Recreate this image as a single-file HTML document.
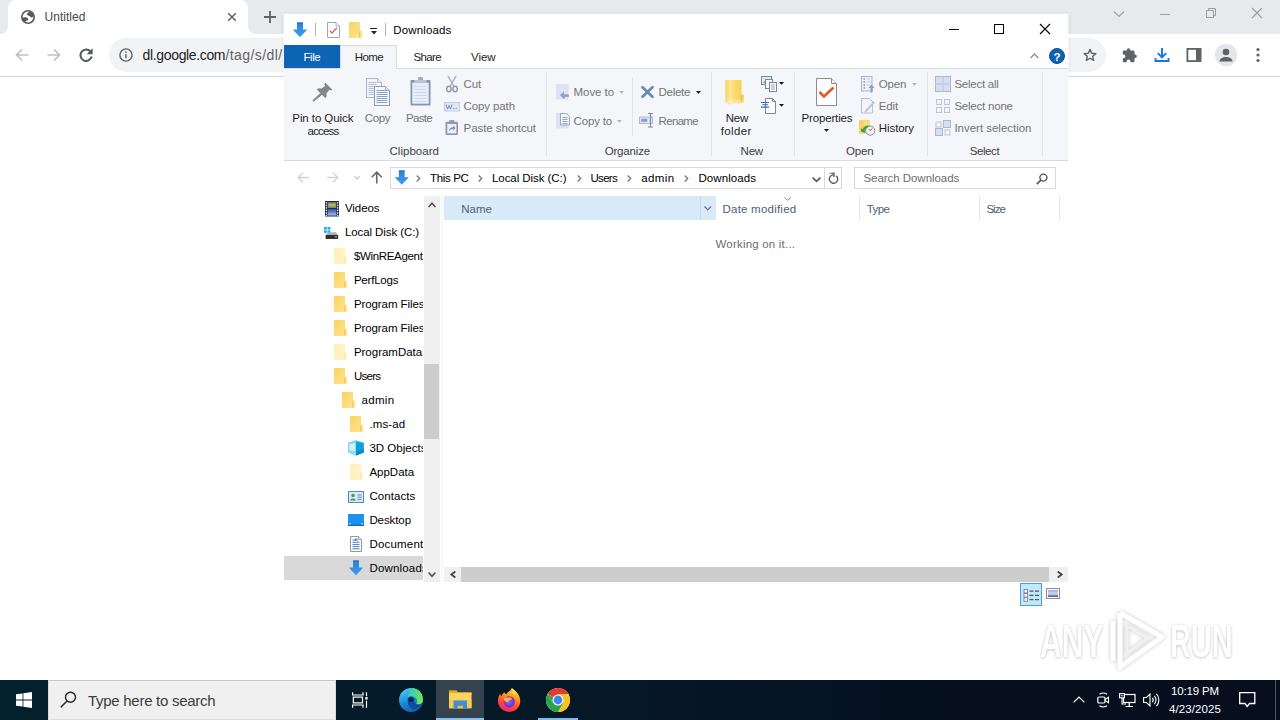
<!DOCTYPE html>
<html>
<head>
<meta charset="utf-8">
<title>Untitled</title>
<style>
*{box-sizing:border-box;margin:0;padding:0}
html,body{width:1280px;height:720px;overflow:hidden;background:#fff}
body{font-family:"Liberation Sans",sans-serif;font-size:12px;color:#000;position:relative}
div,span,svg{position:absolute}
svg{overflow:visible}
.t{white-space:pre;line-height:1}
.vs{width:1px;background:#e2e3e4}
</style>
</head>
<body>
<!-- CHROME BROWSER -->
<div style="left:0px;top:0px;width:1280px;height:34px;background:#e7eaed;"></div>
<div style="left:8px;top:0px;width:240px;height:34px;background:#fff;border-radius:8px 8px 0 0"></div>
<svg style="left:0px;top:26px;" width="8" height="8" viewBox="0 0 8 8"><path d="M0 8 H8 V0 A8 8 0 0 1 0 8Z" fill="#fff"/></svg>
<svg style="left:248px;top:26px;" width="8" height="8" viewBox="0 0 8 8"><path d="M8 8 H0 V0 A8 8 0 0 0 8 8Z" fill="#fff"/></svg>
<div style="left:0px;top:34px;width:1280px;height:42px;background:#fff;"></div>
<div style="left:0px;top:76px;width:1280px;height:1px;background:#d5d7db;"></div>
<div style="left:109px;top:38px;width:997px;height:34px;background:#f1f3f4;border-radius:17px"></div>
<svg style="left:21px;top:10px;" width="14" height="14" viewBox="0 0 14 14"><circle cx="7" cy="7" r="6.200" fill="#fff" stroke="#55585c" stroke-width="1.600"/><path d="M5.800 4.300 C6.300 3 7.300 2.300 8.300 1.700 C10.300 2 12.200 3.800 12.600 6.300 C11.800 7.300 10.600 7.800 9.600 7.200 C9.300 6.200 8.600 6 7.800 5.800 C7 5.600 6.200 5.200 5.800 4.300Z" fill="#55585c"/><path d="M1.200 8 C2.500 7.100 4.300 7 5.500 7.400 C6.700 7.800 7.600 8.700 7.200 9.700 C6.600 10.400 5.500 10.300 4.800 11 C4.300 11.500 4.200 12.100 4 12.400 C2.500 11.600 1.400 10 1.200 8Z" fill="#55585c"/></svg>
<span class="t" style="left:44.50px;top:11px;font-size:12px;color:#45474a;letter-spacing:0.039px;">Untitled</span>
<svg style="left:227px;top:12px;" width="10" height="10" viewBox="0 0 10 10"><path d="M1.200 1.200 L8.800 8.800 M8.800 1.200 L1.200 8.800" stroke="#5f6368" stroke-width="1.500" fill="none"/></svg>
<svg style="left:263px;top:10px;" width="14" height="14" viewBox="0 0 14 14"><path d="M7 1 V13 M1 7 H13" stroke="#5f6368" stroke-width="1.800" fill="none"/></svg>
<svg style="left:15px;top:48px;" width="14" height="14" viewBox="0 0 14 14"><path d="M13.500 7 H1.800 M7 1.500 L1.500 7 L7 12.500" stroke="#bdc1c6" stroke-width="1.700" fill="none"/></svg>
<svg style="left:47px;top:48px;" width="14" height="14" viewBox="0 0 14 14"><path d="M.5 7 H12.200 M7 1.500 L12.500 7 L7 12.500" stroke="#bdc1c6" stroke-width="1.700" fill="none"/></svg>
<svg style="left:79px;top:48px;" width="14" height="14" viewBox="0 0 14 14"><path d="M11.600 3.600 A5.700 5.700 0 1 0 12.700 8.600" stroke="#54575b" stroke-width="2" fill="none"/><path d="M13.600 .3 V6.200 H7.700Z" fill="#54575b"/></svg>
<svg style="left:119px;top:48px;" width="14" height="14" viewBox="0 0 14 14"><circle cx="7" cy="7" r="6.100" fill="none" stroke="#5f6368" stroke-width="1.400"/><path d="M7 6.200 V10.300" stroke="#5f6368" stroke-width="1.500"/><circle cx="7" cy="4.100" r=".9" fill="#5f6368"/></svg>
<span class="t" style="left:142.60px;top:48px;font-size:14px;color:#202124;letter-spacing:-0.352px;">dl.google.com</span>
<span class="t" style="left:225.40px;top:48px;font-size:14px;color:#5f6368;letter-spacing:0.428px;">/tag/s/dl/</span>
<svg style="left:1083px;top:48px;" width="14" height="14" viewBox="0 0 16 16"><path d="M8 1.600 L9.900 6 L14.700 6.400 L11.100 9.500 L12.200 14.200 L8 11.700 L3.800 14.200 L4.900 9.500 L1.300 6.400 L6.100 6Z" fill="none" stroke="#5f6368" stroke-width="1.600" stroke-linejoin="round"/></svg>
<svg style="left:1122px;top:47px;" width="16" height="16" viewBox="0 0 16 16"><path d="M6.500 1.200a1.700 1.700 0 0 1 1.700 1.700v.6h3.100a1.200 1.200 0 0 1 1.200 1.200v2.900h.6a1.750 1.750 0 0 1 0 3.500h-.6v2.900a1.200 1.200 0 0 1-1.200 1.200h-2.800v-.7a1.900 1.900 0 0 0-3.800 0v.7H2a1.200 1.200 0 0 1-1.200-1.200v-2.800h.7a1.900 1.900 0 0 0 0-3.800H.8V4.700A1.200 1.200 0 0 1 2 3.500h2.800v-.6a1.700 1.700 0 0 1 1.700-1.700z" fill="#5f6368"/></svg>
<svg style="left:1154px;top:47px;" width="16" height="16" viewBox="0 0 16 16"><path d="M8 1 V10 M3.800 6.200 L8 10.400 L12.200 6.200" stroke="#1a73e8" stroke-width="1.900" fill="none"/><path d="M1.500 11 V14 H14.500 V11" stroke="#1a73e8" stroke-width="1.900" fill="none"/></svg>
<svg style="left:1186px;top:47px;" width="16" height="16" viewBox="0 0 16 16"><rect x="1.400" y="1.900" width="13.200" height="12.200" fill="none" stroke="#5f6368" stroke-width="1.800"/><rect x="10" y="2" width="4.500" height="12" fill="#5f6368"/></svg>
<svg style="left:1214px;top:43px;" width="24" height="24" viewBox="0 0 24 24"><circle cx="12" cy="12" r="11.200" fill="#e4e6e9"/><circle cx="12" cy="9" r="3.300" fill="#5f6368"/><path d="M5.500 18.500c0-3 3.200-4.600 6.500-4.600s6.500 1.600 6.500 4.600z" fill="#5f6368"/></svg>
<svg style="left:1256px;top:47px;" width="4" height="16" viewBox="0 0 4 16"><circle cx="2" cy="2.500" r="1.600" fill="#5f6368"/><circle cx="2" cy="8" r="1.600" fill="#5f6368"/><circle cx="2" cy="13.500" r="1.600" fill="#5f6368"/></svg>
<svg style="left:1113px;top:10px;" width="12" height="8" viewBox="0 0 12 8"><path d="M1 1.500 L6 6.500 L11 1.500" stroke="#9aa0a6" stroke-width="1.100" fill="none"/></svg>
<svg style="left:1160px;top:13.5px;" width="10" height="1" viewBox="0 0 10 1"><rect width="10" height="1" fill="#9aa0a6"/></svg>
<svg style="left:1206px;top:8px;" width="10" height="10" viewBox="0 0 10 10"><path d="M.5 2.500 H7.500 V9.500 H.5Z M2.500 2.500 V.5 H9.500 V7.500 H7.500" stroke="#9aa0a6" stroke-width="1" fill="none"/></svg>
<svg style="left:1252px;top:8px;" width="10" height="10" viewBox="0 0 10 10"><path d="M0 0 L10 10 M10 0 L0 10" stroke="#9aa0a6" stroke-width="1.100" fill="none"/></svg>
<!-- FILE EXPLORER WINDOW -->
<div style="left:283px;top:13px;width:786px;height:63px;background:transparent;box-shadow:0 0 3px rgba(0,0,0,.08)"></div>
<div style="left:284px;top:14px;width:784px;height:597px;background:#fff;"></div>
<svg style="left:292px;top:21.5px;" width="16" height="16" viewBox="0 0 16 16"><defs><linearGradient id="dlg" x1="0" y1="0" x2="0" y2="1"><stop offset="0" stop-color="#2f80d6"/><stop offset="1" stop-color="#3c9cf0"/></linearGradient></defs><path d="M5 .5 H11 V7.500 H15.300 L8 15.200 L.7 7.500 H5Z" fill="url(#dlg)"/><path d="M5 .5 H11 V1.800 H5Z" fill="#2a72c4"/></svg>
<div style="left:315px;top:23px;width:1px;height:13px;background:#b5b5b5;"></div>
<svg style="left:327px;top:22px;" width="13" height="16" viewBox="0 0 13 16"><path d="M.5 .5 H9 L12.500 4 V15.500 H.5Z" fill="#fff" stroke="#9b9ba8" stroke-width=".9"/><path d="M9 .5 V4 H12.500" fill="#f0f0f0" stroke="#9b9ba8" stroke-width=".7"/><path d="M2.800 8.600 L5 11 L10 5.800" fill="none" stroke="#e2674a" stroke-width="1.400"/></svg>
<svg style="left:349px;top:22px;" width="13" height="16" viewBox="0 0 13 16"><defs><linearGradient id="fn" x1="0" y1="0" x2="1" y2="1"><stop offset="0" stop-color="#fbd35e"/><stop offset="1" stop-color="#ffe596"/></linearGradient></defs><path d="M0 0 H11 V8.500 H13 V16 H0Z" fill="url(#fn)"/><path d="M10.600 9.500 V15.500" stroke="#e9bd4a" stroke-width=".8"/><path d="M11 8.500 H13" stroke="#fff8dc" stroke-width=".8"/></svg>
<div style="left:370px;top:27.5px;width:7px;height:1.2px;background:#222;"></div>
<svg style="left:370.5px;top:30.5px;" width="6" height="3.5" viewBox="0 0 6 3.5"><path d="M0 0 H6 L3 3.5Z" fill="#222"/></svg>
<div style="left:385px;top:23px;width:1px;height:13px;background:#b5b5b5;"></div>
<span class="t" style="left:393.30px;top:25px;font-size:11.5px;color:#000;letter-spacing:0.144px;">Downloads</span>
<div style="left:949px;top:28.5px;width:10px;height:1px;background:#000;"></div>
<div style="left:994px;top:24px;width:10px;height:10px;background:transparent;border:1px solid #000"></div>
<svg style="left:1040px;top:24px;" width="10" height="10" viewBox="0 0 10 10"><path d="M0 0 L10 10 M10 0 L0 10" stroke="#000" stroke-width="1.100" fill="none"/></svg>
<div style="left:284px;top:45px;width:56px;height:23px;background:#0d64b2;"></div>
<span class="t" style="left:303.40px;top:52px;font-size:11.5px;color:#fff;letter-spacing:-0.408px;">File</span>
<div style="left:284px;top:68px;width:784px;height:93px;background:#f4f6f9;border-top:1px solid #dadbdc;border-bottom:1px solid #dadbdc"></div>
<div style="left:340px;top:45px;width:57px;height:24px;background:#f4f6f9;border:1px solid #dadbdc;border-bottom:none"></div>
<span class="t" style="left:354.70px;top:52px;font-size:11.5px;color:#1e1e1e;letter-spacing:-0.597px;">Home</span>
<span class="t" style="left:413.60px;top:52px;font-size:11.5px;color:#1e1e1e;letter-spacing:-0.658px;">Share</span>
<span class="t" style="left:471.00px;top:52px;font-size:11.5px;color:#1e1e1e;letter-spacing:-0.055px;">View</span>
<svg style="left:1030px;top:53px;" width="9" height="5.5" viewBox="0 0 9 5.5"><path d="M.6 5 L4.500 1 L8.400 5" fill="none" stroke="#8e8e8e" stroke-width="1.300"/></svg>
<div style="left:1049px;top:48px;width:16px;height:16px;background:#0d62b3;border-radius:8px;border:1px solid #0a4f93"></div>
<span class="t" style="left:1053.60px;top:52px;font-size:11.5px;color:#fff;letter-spacing:-0.231px;font-weight:700;">?</span>
<div style="left:546px;top:72px;width:1px;height:84px;background:#e1e2e4;"></div>
<div style="left:632px;top:78px;width:1px;height:58px;background:#e1e2e4;"></div>
<div style="left:711px;top:72px;width:1px;height:84px;background:#e1e2e4;"></div>
<div style="left:794px;top:72px;width:1px;height:84px;background:#e1e2e4;"></div>
<div style="left:927px;top:72px;width:1px;height:84px;background:#e1e2e4;"></div>
<div style="left:1042px;top:72px;width:1px;height:84px;background:#e1e2e4;"></div>
<svg style="left:312px;top:82px;" width="21" height="20" viewBox="0 0 21 20"><path d="M13.200 .6 L20.300 7.700 L18.600 8.600 L17.300 7.800 L14.300 11.800 C15 13.600 14.600 15 13.500 16.200 L4.800 7.500 C6 6.300 7.500 6 9.200 6.700 L13.200 3.700 L12.300 2.300Z" fill="#80878a"/><path d="M8.600 11.300 L9.800 12.500 L1.600 19.300 L.9 18.600Z" fill="#80878a" stroke="#80878a" stroke-width="1"/></svg>
<span class="t" style="left:292.30px;top:113px;font-size:11.5px;color:#1e1e1e;letter-spacing:-0.075px;">Pin to Quick</span>
<span class="t" style="left:307.60px;top:126px;font-size:11.5px;color:#1e1e1e;letter-spacing:-0.833px;">access</span>
<svg style="left:366px;top:78px;" width="24" height="28" viewBox="0 0 24 28"><path d="M.5 .5 H11.500 L15.500 4.500 V19.500 H.5Z" fill="#f3f5fc" stroke="#aab3cb"/><path d="M11.500 .5 V4.500 H15.500" fill="#e4e8f4" stroke="#aab3cb" stroke-width=".8"/><path d="M2.5 4.5 H10.5" stroke="#b4bed8" stroke-width="1"/><path d="M2.5 6.5 H10.5" stroke="#b4bed8" stroke-width="1"/><path d="M2.5 8.5 H10.5" stroke="#b4bed8" stroke-width="1"/><path d="M2.5 10.5 H10.5" stroke="#b4bed8" stroke-width="1"/><path d="M2.5 12.5 H10.5" stroke="#b4bed8" stroke-width="1"/><path d="M2.5 14.5 H10.5" stroke="#b4bed8" stroke-width="1"/><path d="M2.5 16.5 H10.5" stroke="#b4bed8" stroke-width="1"/><path d="M8.500 8.500 H19.500 L23.500 12.500 V27.500 H8.500Z" fill="#f6f8fe" stroke="#8f9ab8"/><path d="M19.500 8.500 V12.500 H23.500" fill="#dfe4f1" stroke="#8f9ab8" stroke-width=".8"/><path d="M10.5 12.5 H21.5" stroke="#919ec4" stroke-width="1"/><path d="M10.5 14.5 H21.5" stroke="#919ec4" stroke-width="1"/><path d="M10.5 16.5 H21.5" stroke="#919ec4" stroke-width="1"/><path d="M10.5 18.5 H21.5" stroke="#919ec4" stroke-width="1"/><path d="M10.5 20.5 H21.5" stroke="#919ec4" stroke-width="1"/><path d="M10.5 22.5 H21.5" stroke="#919ec4" stroke-width="1"/><path d="M10.5 24.5 H21.5" stroke="#919ec4" stroke-width="1"/></svg>
<span class="t" style="left:364.80px;top:113px;font-size:11.5px;color:#747474;letter-spacing:-0.415px;">Copy</span>
<svg style="left:409.5px;top:77px;" width="21" height="29" viewBox="0 0 21 29"><rect x="8" y="0" width="5" height="3.500" rx="1.200" fill="#a3acbf"/><rect x=".5" y="3" width="20" height="25.500" rx=".8" fill="#8a95ae"/><rect x="4.500" y="3" width="12" height="2.600" fill="#bcc3d3"/><rect x="2.300" y="5.700" width="16.400" height="21" fill="#e9eefb"/><path d="M4.5 9.5 H16.5" stroke="#cfd7ea" stroke-width="1"/><path d="M4.5 12.5 H16.5" stroke="#cfd7ea" stroke-width="1"/><path d="M4.5 15.5 H16.5" stroke="#cfd7ea" stroke-width="1"/><path d="M4.5 18.5 H16.5" stroke="#cfd7ea" stroke-width="1"/><path d="M4.5 21.5 H16.5" stroke="#cfd7ea" stroke-width="1"/><path d="M4.5 24.5 H16.5" stroke="#cfd7ea" stroke-width="1"/></svg>
<span class="t" style="left:406.00px;top:113px;font-size:11.5px;color:#747474;letter-spacing:-0.684px;">Paste</span>
<svg style="left:446px;top:75.5px;" width="12" height="16.5" viewBox="0 0 12 16.5"><path d="M2 0 L8.300 11 M10 0 L3.700 11" stroke="#a9b0bc" stroke-width="1.500" fill="none"/><ellipse cx="2.900" cy="13" rx="2.200" ry="2.700" fill="none" stroke="#8f9bb3" stroke-width="1.500"/><ellipse cx="9.100" cy="13" rx="2.200" ry="2.700" fill="none" stroke="#8f9bb3" stroke-width="1.500"/></svg>
<span class="t" style="left:463.60px;top:79px;font-size:11.5px;color:#747474;letter-spacing:-0.102px;">Cut</span>
<svg style="left:443.5px;top:101.5px;" width="16" height="9.5" viewBox="0 0 16 9.5"><rect x=".5" y=".5" width="15" height="8.500" fill="#dfe5f3" stroke="#c5cde0"/><path d="M2 2.500 L3.500 7 L5 3.500 L6.500 7 L8 2.500" fill="none" stroke="#7f8fb8" stroke-width="1"/><path d="M9 6.500 H14" stroke="#9aa7c4" stroke-width="1" stroke-dasharray="1.500 1"/></svg>
<span class="t" style="left:463.60px;top:101px;font-size:11.5px;color:#747474;letter-spacing:-0.115px;">Copy path</span>
<svg style="left:444.5px;top:120px;" width="13.5" height="15.5" viewBox="0 0 13.5 15.5"><rect x="4" y="0" width="5.500" height="3" rx="1" fill="#98a3b8"/><rect x=".5" y="1.800" width="12.500" height="13.200" rx=".8" fill="#8f9bb3"/><rect x="2.300" y="4" width="9" height="9.300" fill="#eef1fa"/><path d="M4 11.500 C4 8.500 5.500 7.200 8 7.200 V5.500 L10.500 8 L8 10.500 V8.900 C6.300 8.900 5 9.500 4 11.500Z" fill="#7f93c8"/></svg>
<span class="t" style="left:463.60px;top:123px;font-size:11.5px;color:#747474;letter-spacing:-0.080px;">Paste shortcut</span>
<span class="t" style="left:389.50px;top:146px;font-size:11.5px;color:#3f3f3f;letter-spacing:0.030px;">Clipboard</span>
<svg style="left:556px;top:84px;" width="13" height="16" viewBox="0 0 13 16"><rect x="0" y="0" width="12.500" height="15.500" fill="#dde3f2"/><path d="M12.800 10.300 H8 V7.500 L3.800 11.200 L8 14.800 V12.300 H12.800Z" fill="#94a2c6"/><path d="M12.800 12.300 H8 V14.800" fill="none" stroke="#6f7fa8" stroke-width=".6"/></svg>
<span class="t" style="left:573.60px;top:87px;font-size:11.5px;color:#747474;letter-spacing:-0.075px;">Move to</span>
<svg style="left:619px;top:91px;" width="5" height="2.8" viewBox="0 0 5 2.8"><path d="M0 0 H5 L2.5 2.8Z" fill="#b4b4b4"/></svg>
<svg style="left:556px;top:113px;" width="14" height="16" viewBox="0 0 14 16"><rect x="0" y="0" width="12.500" height="15.500" fill="#dde3f2"/><path d="M4.500 .5 H10.500 L13.500 3.500 V12 H4.500Z" fill="#f4f6fc" stroke="#9aa5c0"/><path d="M6.5 4.5 H11.5" stroke="#9aa5c0" stroke-width="1"/><path d="M6.5 6.5 H11.5" stroke="#9aa5c0" stroke-width="1"/><path d="M6.5 8.5 H11.5" stroke="#9aa5c0" stroke-width="1"/><path d="M6.5 10.5 H11.5" stroke="#9aa5c0" stroke-width="1"/></svg>
<span class="t" style="left:573.60px;top:116px;font-size:11.5px;color:#747474;letter-spacing:-0.177px;">Copy to</span>
<svg style="left:617px;top:120px;" width="5" height="2.8" viewBox="0 0 5 2.8"><path d="M0 0 H5 L2.5 2.8Z" fill="#b4b4b4"/></svg>
<svg style="left:640.5px;top:86px;" width="13" height="12" viewBox="0 0 13 12"><path d="M1.500 1.200 L11.500 10.800 M11.500 1.200 L1.500 10.800" stroke="#6c88ab" stroke-width="2.700" fill="none" stroke-linecap="round"/></svg>
<span class="t" style="left:658.60px;top:87px;font-size:11.5px;color:#747474;letter-spacing:-0.308px;">Delete</span>
<svg style="left:696px;top:91px;" width="5" height="2.8" viewBox="0 0 5 2.8"><path d="M0 0 H5 L2.5 2.8Z" fill="#111"/></svg>
<svg style="left:639px;top:113px;" width="16" height="14.5" viewBox="0 0 16 14.5"><rect x=".5" y="4" width="13" height="6.500" fill="#dfe5f3" stroke="#aebbd6"/><rect x="2.200" y="5.700" width="6" height="3.100" fill="#8b9fd0"/><path d="M9 .5 H14 M9 14 H14 M11.500 .5 V14" stroke="#7d8cae" stroke-width="1.200" fill="none"/></svg>
<span class="t" style="left:658.60px;top:116px;font-size:11.5px;color:#747474;letter-spacing:-0.678px;">Rename</span>
<span class="t" style="left:604.70px;top:146px;font-size:11.5px;color:#3f3f3f;letter-spacing:-0.171px;">Organize</span>
<svg style="left:725px;top:80px;" width="19" height="25" viewBox="0 0 19 25"><defs><linearGradient id="nf" x1="0" y1="0" x2="1" y2="0"><stop offset="0" stop-color="#f7d257"/><stop offset=".28" stop-color="#fde898"/><stop offset=".45" stop-color="#fbdc70"/><stop offset="1" stop-color="#f6cf50"/></linearGradient><linearGradient id="nf2" x1="0" y1="0" x2="0" y2="1"><stop offset="0" stop-color="#fff" stop-opacity="0"/><stop offset=".75" stop-color="#fff" stop-opacity="0"/><stop offset="1" stop-color="#fff" stop-opacity=".45"/></linearGradient></defs><path d="M.3 0 H16.500 V14.500 H18.800 V22.500 H16.500 V23.200 H.3Z" fill="url(#nf)"/><path d="M.3 0 H16.500 V14.500 H18.800 V22.500 H16.500 V23.200 H.3Z" fill="url(#nf2)"/><path d="M16.300 15 V22.500" stroke="#e6bb45" stroke-width=".8"/><path d="M3 23.200 L5.500 25 L5.500 23.200Z" fill="#f3d574" opacity=".7"/></svg>
<span class="t" style="left:725.70px;top:113px;font-size:11.5px;color:#1e1e1e;letter-spacing:-0.239px;">New</span>
<span class="t" style="left:720.80px;top:126px;font-size:11.5px;color:#1e1e1e;letter-spacing:0.353px;">folder</span>
<svg style="left:761px;top:76px;" width="16" height="16" viewBox="0 0 16 16"><rect x=".5" y=".5" width="10" height="8" fill="#dfeaf5" stroke="#6f8db0"/><path d="M2 7 L4.500 4 L6.500 6 L8 4.500 L9.500 7Z" fill="#7fa2c8"/><rect x="4.500" y="3.500" width="7" height="9" fill="#f5f7fa" stroke="#7b8697"/><rect x="8.500" y="6.500" width="7" height="9" fill="#fff" stroke="#7b8697"/><path d="M10 9 H14" stroke="#9aa3b3" stroke-width="1"/><path d="M10 11 H14" stroke="#9aa3b3" stroke-width="1"/><path d="M10 13 H14" stroke="#9aa3b3" stroke-width="1"/></svg>
<svg style="left:779px;top:82.3px;" width="5" height="2.8" viewBox="0 0 5 2.8"><path d="M0 0 H5 L2.5 2.8Z" fill="#111"/></svg>
<svg style="left:761px;top:98px;" width="15" height="16" viewBox="0 0 15 16"><path d="M4.500 .5 H11.500 L14.500 3.500 V15.500 H4.500Z" fill="#fff" stroke="#7b8697"/><path d="M11.500 .5 V3.500 H14.500" fill="none" stroke="#7b8697"/><path d="M0 4.500 H8 M1.500 6.800 H7 M0 9.100 H8" stroke="#2f6fb5" stroke-width="1.100"/></svg>
<svg style="left:779px;top:104.3px;" width="5" height="2.8" viewBox="0 0 5 2.8"><path d="M0 0 H5 L2.5 2.8Z" fill="#111"/></svg>
<span class="t" style="left:740.50px;top:146px;font-size:11.5px;color:#3f3f3f;letter-spacing:-0.172px;">New</span>
<svg style="left:816px;top:78px;" width="21" height="28" viewBox="0 0 21 28"><path d="M.5 .5 H15.500 L20.500 5.500 V27.500 H.5Z" fill="#fff" stroke="#8c8c8c"/><path d="M15.500 .5 V5.500 H20.500" fill="#eee" stroke="#8c8c8c"/><path d="M3.500 14 L8 18.500 L17.500 9.500" fill="none" stroke="#e2572c" stroke-width="2.600"/></svg>
<span class="t" style="left:801.40px;top:113px;font-size:11.5px;color:#1e1e1e;letter-spacing:-0.132px;">Properties</span>
<svg style="left:823.8px;top:129.2px;" width="5" height="2.8" viewBox="0 0 5 2.8"><path d="M0 0 H5 L2.5 2.8Z" fill="#111"/></svg>
<svg style="left:861px;top:75.5px;" width="13" height="16.5" viewBox="0 0 13 16.5"><rect x=".5" y=".5" width="10.500" height="14.500" fill="#eef1f8" stroke="#a9b5cd"/><path d="M2.500 3 H4 M2.500 6 H4 M2.500 9 H4 M2.500 12 H4" stroke="#7f93c8" stroke-width="1.400"/><path d="M5.500 3 H9 M5.500 6 H9 M5.500 9 H9" stroke="#c5cde0" stroke-width="1"/><path d="M9.500 16.500 V12 H7.500 L10.500 8.500 L13.500 12 H11.500 V16.500Z" fill="#8d9cc0"/></svg>
<span class="t" style="left:878.75px;top:79px;font-size:11.5px;color:#747474;letter-spacing:-0.160px;">Open</span>
<svg style="left:912px;top:83px;" width="5" height="2.8" viewBox="0 0 5 2.8"><path d="M0 0 H5 L2.5 2.8Z" fill="#b4b4b4"/></svg>
<svg style="left:861px;top:98px;" width="13" height="15.5" viewBox="0 0 13 15.5"><path d="M.5 .5 H8.500 L11.500 3.500 V15 H.5Z" fill="#f4f6fb" stroke="#b4bfd4"/><path d="M12.500 3.500 L5 12 L3.800 14.200 L6 13 L13.500 4.500Z" fill="#c3cbdb" stroke="#a9b5cd" stroke-width=".6"/></svg>
<span class="t" style="left:878.75px;top:101px;font-size:11.5px;color:#747474;letter-spacing:-0.145px;">Edit</span>
<svg style="left:859px;top:120px;" width="16.5" height="16" viewBox="0 0 16.5 16"><rect x="0" y="0" width="11" height="13.500" fill="#fbdc7c"/><rect x="0" y="0" width="4.500" height="13.500" fill="#f8d164"/><circle cx="11.200" cy="10.600" r="4.600" fill="#f4eff3" stroke="#8a9098" stroke-width="1"/><path d="M11.200 10.600 L13.100 8.500 M11.200 10.600 L9.900 9.200" stroke="#444" stroke-width=".8" fill="none"/><path d="M2 11.600 L6.500 13 L5.700 10.800 C6.500 8.600 8.300 7 10.800 6.300 C8.800 4.600 5.300 5.300 3.800 9.200 L2.300 8.200Z" fill="#2fa83a"/></svg>
<span class="t" style="left:878.75px;top:123px;font-size:11.5px;color:#1e1e1e;letter-spacing:-0.076px;">History</span>
<span class="t" style="left:846.00px;top:146px;font-size:11.5px;color:#3f3f3f;letter-spacing:-0.160px;">Open</span>
<svg style="left:935px;top:76px;" width="16" height="16" viewBox="0 0 16 16"><rect x=".5" y=".5" width="15" height="15" fill="#d7deef" stroke="#aab6d3"/><path d="M8 .5 V15.500 M.5 8 H15.500" stroke="#aab6d3" stroke-width="1"/><path d="M8 0 V16 M0 8 H16" stroke="#f5f6f7" stroke-width=".3"/></svg>
<span class="t" style="left:954.40px;top:79px;font-size:11.5px;color:#747474;letter-spacing:-0.247px;">Select all</span>
<svg style="left:935.5px;top:98.5px;" width="15" height="15" viewBox="0 0 15 15"><rect x="0.5" y="0.5" width="5" height="5" fill="#f5f6f9" stroke="#b9c3dc" stroke-width="1"/><rect x="8.5" y="0.5" width="5" height="5" fill="#f5f6f9" stroke="#b9c3dc" stroke-width="1"/><rect x="0.5" y="8.5" width="5" height="5" fill="#f5f6f9" stroke="#b9c3dc" stroke-width="1"/><rect x="8.5" y="8.5" width="5" height="5" fill="#f5f6f9" stroke="#b9c3dc" stroke-width="1"/></svg>
<span class="t" style="left:954.40px;top:101px;font-size:11.5px;color:#747474;letter-spacing:-0.214px;">Select none</span>
<svg style="left:935px;top:120px;" width="16" height="16" viewBox="0 0 16 16"><rect x="1" y="2" width="5" height="5" fill="#f5f6f9" stroke="#b9c3dc"/><rect x="8.500" y=".5" width="7" height="7" fill="#d7deef" stroke="#aab6d3"/><rect x=".5" y="8.500" width="7" height="7" fill="#d7deef" stroke="#aab6d3"/><rect x="10" y="10" width="5" height="5" fill="#f5f6f9" stroke="#b9c3dc"/></svg>
<span class="t" style="left:954.40px;top:123px;font-size:11.5px;color:#747474;letter-spacing:-0.016px;">Invert selection</span>
<span class="t" style="left:969.70px;top:146px;font-size:11.5px;color:#3f3f3f;letter-spacing:-0.395px;">Select</span>
<svg style="left:297px;top:172px;" width="12" height="11" viewBox="0 0 12 11"><path d="M12 5.500 H1.500 M6 .7 L1.200 5.500 L6 10.300" fill="none" stroke="#d2d2d2" stroke-width="1.300"/></svg>
<svg style="left:326.5px;top:172px;" width="12" height="11" viewBox="0 0 12 11"><path d="M0 5.500 H10.500 M6 .7 L10.800 5.500 L6 10.300" fill="none" stroke="#d2d2d2" stroke-width="1.300"/></svg>
<svg style="left:353.5px;top:176px;" width="6" height="3.5" viewBox="0 0 6 3.5"><path d="M.3 .3 L3 3 L5.700 .3" fill="none" stroke="#c4c4c4" stroke-width="1.100"/></svg>
<svg style="left:371.3px;top:171.2px;" width="11.5" height="12.5" viewBox="0 0 11.5 12.5"><path d="M5.750 12.500 V1.500 M.7 6.300 L5.750 1.200 L10.800 6.300" fill="none" stroke="#686868" stroke-width="1.600"/></svg>
<div style="left:390px;top:167px;width:452px;height:22px;background:#fff;border:1px solid #d9d9d9"></div>
<svg style="left:393.5px;top:169.5px;" width="15.5" height="15.5" viewBox="0 0 16 16"><defs><linearGradient id="dlg" x1="0" y1="0" x2="0" y2="1"><stop offset="0" stop-color="#2f80d6"/><stop offset="1" stop-color="#3c9cf0"/></linearGradient></defs><path d="M5 .5 H11 V7.500 H15.300 L8 15.200 L.7 7.500 H5Z" fill="url(#dlg)"/><path d="M5 .5 H11 V1.800 H5Z" fill="#2a72c4"/></svg>
<svg style="left:416px;top:175.3px;" width="4.5" height="7" viewBox="0 0 4.5 7"><path d="M.7 .5 L3.700 3.500 L.7 6.500" fill="none" stroke="#777" stroke-width="1.300"/></svg>
<svg style="left:478.2px;top:175.3px;" width="4.5" height="7" viewBox="0 0 4.5 7"><path d="M.7 .5 L3.700 3.500 L.7 6.500" fill="none" stroke="#777" stroke-width="1.300"/></svg>
<svg style="left:576.5px;top:175.3px;" width="4.5" height="7" viewBox="0 0 4.5 7"><path d="M.7 .5 L3.700 3.500 L.7 6.500" fill="none" stroke="#777" stroke-width="1.300"/></svg>
<svg style="left:627.2px;top:175.3px;" width="4.5" height="7" viewBox="0 0 4.5 7"><path d="M.7 .5 L3.700 3.500 L.7 6.500" fill="none" stroke="#777" stroke-width="1.300"/></svg>
<svg style="left:684px;top:175.3px;" width="4.5" height="7" viewBox="0 0 4.5 7"><path d="M.7 .5 L3.700 3.500 L.7 6.500" fill="none" stroke="#777" stroke-width="1.300"/></svg>
<span class="t" style="left:430.00px;top:173px;font-size:11.5px;color:#000;letter-spacing:-0.358px;">This PC</span>
<span class="t" style="left:492.00px;top:173px;font-size:11.5px;color:#000;letter-spacing:-0.060px;">Local Disk (C:)</span>
<span class="t" style="left:590.50px;top:173px;font-size:11.5px;color:#000;letter-spacing:-0.706px;">Users</span>
<span class="t" style="left:641.25px;top:173px;font-size:11.5px;color:#000;letter-spacing:0.384px;">admin</span>
<span class="t" style="left:698.40px;top:173px;font-size:11.5px;color:#000;letter-spacing:0.105px;">Downloads</span>
<svg style="left:812.3px;top:176.6px;" width="9" height="5.2" viewBox="0 0 9 5.2"><path d="M.6 .6 L4.500 4.400 L8.400 .6" fill="none" stroke="#555" stroke-width="1.600"/></svg>
<div style="left:824px;top:168px;width:1px;height:20px;background:#d9d9d9;"></div>
<svg style="left:828px;top:172.1px;" width="11" height="12" viewBox="0 0 11 12"><path d="M8.300 3.900 A4.200 4.200 0 1 1 5 2.900" fill="none" stroke="#5c5c5c" stroke-width="1.400"/><path d="M-.3 1 L6.600 .4 V5 H5.100 V2.100Z" fill="#5c5c5c"/></svg>
<div style="left:854px;top:167px;width:202px;height:22px;background:#fff;border:1px solid #d9d9d9"></div>
<span class="t" style="left:863.40px;top:173px;font-size:11.5px;color:#6d6d6d;letter-spacing:-0.039px;">Search Downloads</span>
<svg style="left:1035.5px;top:172.5px;" width="12" height="12" viewBox="0 0 12 12"><circle cx="7.400" cy="4.600" r="3.500" fill="none" stroke="#555" stroke-width="1.400"/><path d="M4.900 7.100 L.8 11.200" stroke="#555" stroke-width="1.700"/></svg>
<div style="left:284px;top:556px;width:139px;height:24px;background:#d9d9d9;"></div>
<svg style="left:325px;top:201px;" width="14" height="15.5" viewBox="0 0 14 15.5"><rect width="14" height="15.500" fill="#1d2946"/><rect x="2.700" y="1" width="8.600" height="6" fill="#7d8a8c"/><rect x="3.500" y="2.300" width="7" height="3" fill="#c9b13a"/><rect x="2.700" y="1" width="8.600" height="1.300" fill="#5f6f96"/><rect x="2.700" y="8" width="8.600" height="6.500" fill="#4a7fd0"/><rect x="2.700" y="11.800" width="8.600" height="2.700" fill="#8fa9c8"/><rect x="2.700" y="8" width="8.600" height="1.300" fill="#35579a"/><rect x="0.7" y="1.1" width="1.300" height="1.400" fill="#f0f0f0"/><rect x="0.7" y="3.65" width="1.300" height="1.400" fill="#f0f0f0"/><rect x="0.7" y="6.2" width="1.300" height="1.400" fill="#f0f0f0"/><rect x="0.7" y="8.75" width="1.300" height="1.400" fill="#f0f0f0"/><rect x="0.7" y="11.3" width="1.300" height="1.400" fill="#f0f0f0"/><rect x="0.7" y="13.85" width="1.300" height="1.400" fill="#f0f0f0"/><rect x="12" y="1.1" width="1.300" height="1.400" fill="#f0f0f0"/><rect x="12" y="3.65" width="1.300" height="1.400" fill="#f0f0f0"/><rect x="12" y="6.2" width="1.300" height="1.400" fill="#f0f0f0"/><rect x="12" y="8.75" width="1.300" height="1.400" fill="#f0f0f0"/><rect x="12" y="11.3" width="1.300" height="1.400" fill="#f0f0f0"/><rect x="12" y="13.85" width="1.300" height="1.400" fill="#f0f0f0"/></svg>
<span class="t" style="left:345.00px;top:203px;font-size:11.5px;color:#000;letter-spacing:-0.095px;width:78.0px;overflow:hidden;height:15.0px;">Videos</span>
<svg style="left:324px;top:226.5px;" width="15" height="13" viewBox="0 0 15 13"><rect x="0" y="0" width="2.800" height="2.600" fill="#1fb0e2"/><rect x="3.500" y="0" width="2.800" height="2.600" fill="#1fb0e2"/><rect x="0" y="3.300" width="2.800" height="2.600" fill="#1fb0e2"/><rect x="3.500" y="3.300" width="2.800" height="2.600" fill="#1fb0e2"/><path d="M4 5.300 H12 L14 8.300 H1.800Z" fill="#a9b0ac"/><rect x="1.600" y="8" width="12.600" height="3.900" rx=".6" fill="#2c2f33"/><rect x="10.800" y="9.300" width="2.400" height="1.200" fill="#5fdc5f"/></svg>
<span class="t" style="left:345.00px;top:227px;font-size:11.5px;color:#000;letter-spacing:-0.094px;width:78.0px;overflow:hidden;height:15.0px;">Local Disk (C:)</span>
<svg style="left:334px;top:248px;" width="13" height="16" viewBox="0 0 13 16"><defs><linearGradient id="fh" x1="0" y1="0" x2="1" y2="1"><stop offset="0" stop-color="#fff0ba"/><stop offset="1" stop-color="#fff4cc"/></linearGradient></defs><path d="M0 0 H11 V8.500 H13 V16 H0Z" fill="url(#fh)"/><path d="M10.600 9.500 V15.500" stroke="#f5e6ae" stroke-width=".8"/><path d="M11 8.500 H13" stroke="#fff8dc" stroke-width=".8"/></svg>
<span class="t" style="left:353.90px;top:251px;font-size:11.5px;color:#000;letter-spacing:-0.325px;width:69.1px;overflow:hidden;height:15.0px;">$WinREAgent</span>
<svg style="left:334px;top:272px;" width="13" height="16" viewBox="0 0 13 16"><defs><linearGradient id="fn" x1="0" y1="0" x2="1" y2="1"><stop offset="0" stop-color="#fbd35e"/><stop offset="1" stop-color="#ffe596"/></linearGradient></defs><path d="M0 0 H11 V8.500 H13 V16 H0Z" fill="url(#fn)"/><path d="M10.600 9.500 V15.500" stroke="#e9bd4a" stroke-width=".8"/><path d="M11 8.500 H13" stroke="#fff8dc" stroke-width=".8"/></svg>
<span class="t" style="left:353.90px;top:275px;font-size:11.5px;color:#000;letter-spacing:-0.204px;width:69.1px;overflow:hidden;height:15.0px;">PerfLogs</span>
<svg style="left:334px;top:296px;" width="13" height="16" viewBox="0 0 13 16"><defs><linearGradient id="fn" x1="0" y1="0" x2="1" y2="1"><stop offset="0" stop-color="#fbd35e"/><stop offset="1" stop-color="#ffe596"/></linearGradient></defs><path d="M0 0 H11 V8.500 H13 V16 H0Z" fill="url(#fn)"/><path d="M10.600 9.500 V15.500" stroke="#e9bd4a" stroke-width=".8"/><path d="M11 8.500 H13" stroke="#fff8dc" stroke-width=".8"/></svg>
<span class="t" style="left:353.90px;top:299px;font-size:11.5px;color:#000;letter-spacing:-0.082px;width:69.1px;overflow:hidden;height:15.0px;">Program Files</span>
<svg style="left:334px;top:320px;" width="13" height="16" viewBox="0 0 13 16"><defs><linearGradient id="fn" x1="0" y1="0" x2="1" y2="1"><stop offset="0" stop-color="#fbd35e"/><stop offset="1" stop-color="#ffe596"/></linearGradient></defs><path d="M0 0 H11 V8.500 H13 V16 H0Z" fill="url(#fn)"/><path d="M10.600 9.500 V15.500" stroke="#e9bd4a" stroke-width=".8"/><path d="M11 8.500 H13" stroke="#fff8dc" stroke-width=".8"/></svg>
<span class="t" style="left:353.90px;top:323px;font-size:11.5px;color:#000;letter-spacing:-0.082px;width:69.1px;overflow:hidden;height:15.0px;">Program Files (x86)</span>
<svg style="left:334px;top:344px;" width="13" height="16" viewBox="0 0 13 16"><defs><linearGradient id="fh" x1="0" y1="0" x2="1" y2="1"><stop offset="0" stop-color="#fff0ba"/><stop offset="1" stop-color="#fff4cc"/></linearGradient></defs><path d="M0 0 H11 V8.500 H13 V16 H0Z" fill="url(#fh)"/><path d="M10.600 9.500 V15.500" stroke="#f5e6ae" stroke-width=".8"/><path d="M11 8.500 H13" stroke="#fff8dc" stroke-width=".8"/></svg>
<span class="t" style="left:353.90px;top:347px;font-size:11.5px;color:#000;letter-spacing:-0.008px;width:69.1px;overflow:hidden;height:15.0px;">ProgramData</span>
<svg style="left:334px;top:368px;" width="13" height="16" viewBox="0 0 13 16"><defs><linearGradient id="fn" x1="0" y1="0" x2="1" y2="1"><stop offset="0" stop-color="#fbd35e"/><stop offset="1" stop-color="#ffe596"/></linearGradient></defs><path d="M0 0 H11 V8.500 H13 V16 H0Z" fill="url(#fn)"/><path d="M10.600 9.500 V15.500" stroke="#e9bd4a" stroke-width=".8"/><path d="M11 8.500 H13" stroke="#fff8dc" stroke-width=".8"/></svg>
<span class="t" style="left:353.90px;top:371px;font-size:11.5px;color:#000;letter-spacing:-0.726px;width:69.1px;overflow:hidden;height:15.0px;">Users</span>
<svg style="left:342px;top:392px;" width="13" height="16" viewBox="0 0 13 16"><defs><linearGradient id="fn" x1="0" y1="0" x2="1" y2="1"><stop offset="0" stop-color="#fbd35e"/><stop offset="1" stop-color="#ffe596"/></linearGradient></defs><path d="M0 0 H11 V8.500 H13 V16 H0Z" fill="url(#fn)"/><path d="M10.600 9.500 V15.500" stroke="#e9bd4a" stroke-width=".8"/><path d="M11 8.500 H13" stroke="#fff8dc" stroke-width=".8"/></svg>
<span class="t" style="left:361.50px;top:395px;font-size:11.5px;color:#000;letter-spacing:0.314px;width:61.5px;overflow:hidden;height:15.0px;">admin</span>
<svg style="left:350px;top:416px;" width="13" height="16" viewBox="0 0 13 16"><defs><linearGradient id="fn" x1="0" y1="0" x2="1" y2="1"><stop offset="0" stop-color="#fbd35e"/><stop offset="1" stop-color="#ffe596"/></linearGradient></defs><path d="M0 0 H11 V8.500 H13 V16 H0Z" fill="url(#fn)"/><path d="M10.600 9.500 V15.500" stroke="#e9bd4a" stroke-width=".8"/><path d="M11 8.500 H13" stroke="#fff8dc" stroke-width=".8"/></svg>
<span class="t" style="left:369.40px;top:419px;font-size:11.5px;color:#000;letter-spacing:0.124px;width:53.6px;overflow:hidden;height:15.0px;">.ms-ad</span>
<svg style="left:348px;top:440px;" width="16" height="16" viewBox="0 0 16 16"><path d="M.3 2.800 L8 .5 L15.700 2.800 V12.600 L8 15.600 L.3 12.600Z" fill="#35bfe8"/><path d="M.3 2.800 L8 1.600 V15.600 L.3 12.600Z" fill="#8adff1"/><path d="M1.500 4.300 L6.800 3.300 V11 L1.500 10.300Z" fill="#d3f3fa"/><path d="M8 1.600 L15.700 2.800 V12.600 L8 15.600Z" fill="#10a1dd"/><path d="M8 11 L15.700 9 V12.600 L8 15.600Z" fill="#0b8ac6"/><path d="M.3 2.800 L8 .5 L15.700 2.800 L8 1.700Z" fill="#5fd3ee"/></svg>
<span class="t" style="left:369.40px;top:443px;font-size:11.5px;color:#000;letter-spacing:0.029px;width:53.6px;overflow:hidden;height:15.0px;">3D Objects</span>
<svg style="left:350px;top:464px;" width="13" height="16" viewBox="0 0 13 16"><defs><linearGradient id="fh" x1="0" y1="0" x2="1" y2="1"><stop offset="0" stop-color="#fff0ba"/><stop offset="1" stop-color="#fff4cc"/></linearGradient></defs><path d="M0 0 H11 V8.500 H13 V16 H0Z" fill="url(#fh)"/><path d="M10.600 9.500 V15.500" stroke="#f5e6ae" stroke-width=".8"/><path d="M11 8.500 H13" stroke="#fff8dc" stroke-width=".8"/></svg>
<span class="t" style="left:369.40px;top:467px;font-size:11.5px;color:#000;width:53.6px;overflow:hidden;height:15.0px;">AppData</span>
<svg style="left:348px;top:490.5px;" width="16" height="12" viewBox="0 0 16 12"><rect x=".5" y=".5" width="15" height="11" fill="#dbe9f7" stroke="#5d89b8"/><circle cx="5" cy="4.500" r="1.700" fill="#3c9a5f"/><path d="M2.200 9.500 C2.200 6.800 7.800 6.800 7.800 9.500Z" fill="#3c9a5f"/><path d="M9.500 4 H13.500 M9.500 6.200 H13.500 M9.500 8.400 H13.500" stroke="#5d89b8" stroke-width="1"/></svg>
<span class="t" style="left:369.40px;top:491px;font-size:11.5px;color:#000;letter-spacing:0.064px;width:53.6px;overflow:hidden;height:15.0px;">Contacts</span>
<svg style="left:348px;top:514px;" width="16" height="12" viewBox="0 0 16 12"><rect x="0" y="0" width="16" height="12" rx=".6" fill="#1e90ee"/><rect x="0" y="10.600" width="16" height="1.400" fill="#1668c0"/><rect x="1.200" y="9" width="1.400" height="1.400" fill="#d6ecff"/><rect x="13.400" y="9" width="1.400" height="1.400" fill="#d6ecff"/></svg>
<span class="t" style="left:369.40px;top:515px;font-size:11.5px;color:#000;letter-spacing:-0.084px;width:53.6px;overflow:hidden;height:15.0px;">Desktop</span>
<svg style="left:350px;top:536px;" width="12" height="16" viewBox="0 0 12 16"><path d="M.5 .5 H8.500 L11.500 3.500 V15.500 H.5Z" fill="#fff" stroke="#8d97a5"/><path d="M8.500 .5 V3.500 H11.500" fill="#e8ecf2" stroke="#8d97a5" stroke-width=".8"/><path d="M2.500 4 H6 M2.500 6.200 H9.500 M2.500 8.400 H9.500 M2.500 10.600 H9.500 M2.500 12.800 H9.500" stroke="#3f7fc4" stroke-width="1"/><rect x="5" y="2.600" width="2.500" height="2" fill="#3f7fc4"/></svg>
<span class="t" style="left:369.40px;top:539px;font-size:11.5px;color:#000;letter-spacing:0.197px;width:53.6px;overflow:hidden;height:15.0px;">Documents</span>
<svg style="left:348px;top:560px;" width="16" height="16" viewBox="0 0 16 16"><defs><linearGradient id="dlg" x1="0" y1="0" x2="0" y2="1"><stop offset="0" stop-color="#2f80d6"/><stop offset="1" stop-color="#3c9cf0"/></linearGradient></defs><path d="M5 .5 H11 V7.500 H15.300 L8 15.200 L.7 7.500 H5Z" fill="url(#dlg)"/><path d="M5 .5 H11 V1.800 H5Z" fill="#2a72c4"/></svg>
<span class="t" style="left:369.40px;top:563px;font-size:11.5px;color:#000;letter-spacing:0.180px;width:53.6px;overflow:hidden;height:15.0px;">Downloads</span>
<div style="left:424px;top:196px;width:16px;height:386px;background:#f0f0f0;"></div>
<div style="left:424px;top:364px;width:15px;height:74.5px;background:#cdcdcd;"></div>
<div style="left:441px;top:196px;width:2px;height:386px;background:#f8f8f8;"></div>
<svg style="left:427.5px;top:202px;" width="8" height="5.5" viewBox="0 0 8 5.5"><path d="M.6 5 L4 1.200 L7.400 5" fill="none" stroke="#505050" stroke-width="1.600"/></svg>
<svg style="left:427.5px;top:572px;" width="8" height="5.5" viewBox="0 0 8 5.5"><path d="M.6 .5 L4 4.300 L7.400 .5" fill="none" stroke="#505050" stroke-width="1.600"/></svg>
<div style="left:444px;top:196px;width:272px;height:24px;background:#d9ebf9;"></div>
<div style="left:700px;top:196px;width:1px;height:24px;background:#c3dcf1;"></div>
<span class="t" style="left:461.30px;top:204px;font-size:11.5px;color:#4c607a;">Name</span>
<svg style="left:704px;top:206px;" width="7.5" height="4.5" viewBox="0 0 7.5 4.5"><path d="M.5 .5 L3.750 3.800 L7 .5" fill="none" stroke="#5a6b82" stroke-width="1.100"/></svg>
<svg style="left:784px;top:197px;" width="7.5" height="4" viewBox="0 0 7.5 4"><path d="M.5 .4 L3.750 3.400 L7 .4" fill="none" stroke="#8a8a8a" stroke-width="1"/></svg>
<span class="t" style="left:722.50px;top:204px;font-size:11.5px;color:#4c607a;letter-spacing:0.225px;">Date modified</span>
<div style="left:859px;top:196px;width:1px;height:24px;background:#e5e5e5;"></div>
<div style="left:979px;top:196px;width:1px;height:24px;background:#e5e5e5;"></div>
<div style="left:1059px;top:196px;width:1px;height:24px;background:#e5e5e5;"></div>
<span class="t" style="left:866.70px;top:204px;font-size:11.5px;color:#4c607a;letter-spacing:-0.584px;">Type</span>
<span class="t" style="left:986.40px;top:204px;font-size:11.5px;color:#4c607a;letter-spacing:-0.944px;">Size</span>
<span class="t" style="left:715.50px;top:239px;font-size:11.5px;color:#6d6d6d;letter-spacing:0.200px;">Working on it...</span>
<div style="left:444px;top:567px;width:624px;height:15px;background:#f0f0f0;"></div>
<div style="left:461px;top:567px;width:588px;height:15px;background:#cdcdcd;"></div>
<svg style="left:449.5px;top:571px;" width="6" height="7" viewBox="0 0 6 7"><path d="M5.300 .5 L1.300 3.500 L5.300 6.500" fill="none" stroke="#404040" stroke-width="1.700"/></svg>
<svg style="left:1056.5px;top:571px;" width="6" height="7" viewBox="0 0 6 7"><path d="M.7 .5 L4.700 3.500 L.7 6.500" fill="none" stroke="#404040" stroke-width="1.700"/></svg>
<div style="left:1020px;top:583px;width:22px;height:23px;background:#c3e7fb;border:1px solid #4a9fd8"></div>
<svg style="left:1024px;top:588.5px;" width="15" height="13" viewBox="0 0 15 13"><rect x="0" y="0.4" width="3.500" height="3.500" fill="#fff" stroke="#7a6a8a" stroke-width=".8"/><path d="M5.500 2.2 H9.500 M11 2.2 H15" stroke="#3f5f6f" stroke-width="1.200"/><rect x="0" y="4.6" width="3.500" height="3.500" fill="#fff" stroke="#7a6a8a" stroke-width=".8"/><path d="M5.500 6.4 H9.500 M11 6.4 H15" stroke="#3f5f6f" stroke-width="1.200"/><rect x="0" y="8.8" width="3.500" height="3.500" fill="#fff" stroke="#7a6a8a" stroke-width=".8"/><path d="M5.500 10.6 H9.500 M11 10.6 H15" stroke="#3f5f6f" stroke-width="1.200"/></svg>
<svg style="left:1046px;top:588px;" width="14" height="11" viewBox="0 0 14 11"><defs><linearGradient id="lg" x1="0" y1="0" x2="0" y2="1"><stop offset="0" stop-color="#8fb0e8"/><stop offset=".55" stop-color="#cfdcec"/><stop offset="1" stop-color="#3f5560"/></linearGradient></defs><rect x=".5" y=".5" width="13" height="10" fill="#fff" stroke="#8c8c9c"/><rect x="2" y="2" width="10" height="7" fill="url(#lg)"/></svg>
<!-- TASKBAR -->
<div style="left:0px;top:680px;width:1280px;height:40px;background:linear-gradient(90deg,#04202d 0%,#051a28 35%,#06101f 75%,#070e1e 100%);"></div>
<svg style="left:16px;top:692px;" width="16" height="16" viewBox="0 0 16 16"><path d="M0 2.300 L6.600 1.400 V7.600 H0Z M7.400 1.300 L16 0 V7.600 H7.400Z M0 8.400 H6.600 V14.600 L0 13.700Z M7.400 8.400 H16 V16 L7.400 14.700Z" fill="#fff"/></svg>
<div style="left:48px;top:680px;width:288px;height:40px;background:#f0f0f0;border:1px solid #dcdcdc;border-top-color:#c8c8c8"></div>
<svg style="left:60px;top:691px;" width="17" height="17" viewBox="0 0 17 17"><circle cx="10.500" cy="6.300" r="5" fill="none" stroke="#222" stroke-width="1.400"/><path d="M7 10 L.8 16.200" stroke="#222" stroke-width="1.500"/></svg>
<span class="t" style="left:88.00px;top:693px;font-size:15px;color:#3c3c3c;letter-spacing:-0.278px;">Type here to search</span>
<svg style="left:351px;top:691.5px;" width="17" height="16" viewBox="0 0 17 16"><path d="M1.600 .3 V3 H12 V.3 M1.600 15.700 V13 H12 V15.700" fill="none" stroke="#fff" stroke-width="1.200"/><rect x="2.300" y="5.100" width="9.200" height="5.800" fill="none" stroke="#fff" stroke-width="1.200"/><path d="M15.500 .3 V4.300 M15.500 8.700 V15.700" stroke="#fff" stroke-width="1.200"/><rect x="14.400" y="5" width="2.200" height="2.600" fill="#fff"/></svg>
<svg style="left:399px;top:688px;" width="24" height="24" viewBox="0 0 24 24"><defs><linearGradient id="eg1" x1=".2" y1="0" x2=".6" y2="1"><stop offset="0" stop-color="#4fd0f2"/><stop offset=".5" stop-color="#1f90dc"/><stop offset="1" stop-color="#0e5cb2"/></linearGradient><linearGradient id="eg2" x1="0" y1="0" x2="1" y2=".4"><stop offset="0" stop-color="#35c3d3"/><stop offset=".55" stop-color="#4fd98a"/><stop offset="1" stop-color="#72e458"/></linearGradient></defs><circle cx="12" cy="12" r="12" fill="url(#eg1)"/><path d="M12.500 .1 C19.500 0 24.400 5.500 23.900 12.500 C23.600 16.200 20 17.900 16.800 16.500 C18.700 14.800 19 11.500 16 9.300 C14 7.900 11 8 9.300 9.800 C9 6 10.300 2.300 12.500 .1Z" fill="url(#eg2)"/><path d="M8.700 12 C8.700 9.600 10.600 8.300 12.600 8.600 C15 9 16.200 11.500 15.300 13.500 C17 16.800 21 17.200 23.300 14.800 C21.800 19.800 16.200 22.300 12.200 20.200 C9.600 18.700 8.500 15 8.700 12Z" fill="#0b4a98" opacity=".9"/><circle cx="11.800" cy="11.400" r="2.500" fill="#0a274f"/></svg>
<div style="left:436px;top:680px;width:48px;height:40px;background:#34434d;"></div>
<div style="left:436px;top:718px;width:48px;height:2px;background:#85c1f1;"></div>
<svg style="left:448.5px;top:690px;" width="22.5" height="19" viewBox="0 0 22.5 19"><path d="M0 .3 H7.500 L9.300 2.200 H22.500 V5 H0Z" fill="#e6a11d"/><rect x="0" y="2.700" width="22.500" height="15.600" rx=".6" fill="#fcd462"/><path d="M0 9.500 H22.500 V17.700 Q22.500 18.300 21.900 18.300 H.6 Q0 18.300 0 17.700Z" fill="#f8cb4e"/><path d="M4.500 18.700 V10.500 H18 V18.700 H13.700 V14.500 H8.800 V18.700Z" fill="#3d8fd8"/><rect x="8.800" y="14.500" width="4.900" height="1.300" fill="#2a6fb5"/><rect x="8.800" y="15.800" width="4.900" height="2.500" fill="#f3c03e"/></svg>
<svg style="left:497px;top:687.5px;" width="24" height="24" viewBox="0 0 24 24"><defs><linearGradient id="ff1" x1=".7" y1="0" x2=".3" y2="1"><stop offset="0" stop-color="#ffe23a"/><stop offset=".3" stop-color="#ffa01f"/><stop offset=".65" stop-color="#ff4a35"/><stop offset="1" stop-color="#ef1f78"/></linearGradient><radialGradient id="ff2" cx=".45" cy=".45" r=".6"><stop offset="0" stop-color="#a060ff"/><stop offset="1" stop-color="#5a2cc8"/></radialGradient></defs><path d="M12.500 3 C13.500 2.300 14.500 1 14.800 0 C16.500 1.800 18.800 3.200 20.600 5.600 C23.600 9.300 24 14.200 22 18.200 C19.500 23 14 24.800 9.300 23.500 C3.800 22 .4 17 1 11.500 C1.200 9 2.300 6.800 3.300 5.800 C3.500 7.200 4 8 4.600 8.300 C5 6.300 6.500 4.800 7.500 4.300 C7.800 5.300 8.500 6 9.300 6.300 C10 5 11 3.800 12.500 3Z" fill="url(#ff1)"/><circle cx="12.200" cy="13.800" r="5.600" fill="url(#ff2)"/><path d="M6.500 10.300 C8.800 8.800 10.800 9.800 12.300 9.600 C14 9.400 15.300 10.500 14.600 11.600 C13 12 11.600 12.500 11 14 C9 14.500 7 13.200 6.500 10.300Z" fill="#ffb52e"/><path d="M14.800 0 C16.500 1.800 18.800 3.200 20.600 5.600 C19 5 17.500 5.300 16.300 6.300 C16 4 15 1.800 14.800 0Z" fill="#fff04a" opacity=".8"/></svg>
<svg style="left:546px;top:688px;" width="24" height="24" viewBox="0 0 24 24"><circle cx="12" cy="12" r="12" fill="#fff"/><path d="M12 12 L1.600 6 A12 12 0 0 1 22.400 6Z" fill="#e33b2e"/><path d="M12 0 A12 12 0 0 1 22.400 6 H12Z" fill="#e33b2e"/><path d="M22.400 6 A12 12 0 0 1 12 24 L17.200 15 Z" fill="#fbc116"/><path d="M22.400 6 H12 L17.200 15Z" fill="#fbc116"/><path d="M1.600 6 A12 12 0 0 0 12 24 L17.200 15 H6.800Z" fill="#2ba24c"/><path d="M1.600 6 L6.800 15 L12 12Z" fill="#2ba24c"/><circle cx="12" cy="12" r="5.500" fill="#fff"/><circle cx="12" cy="12" r="4.400" fill="#3f86f0"/></svg>
<div style="left:538px;top:718px;width:40px;height:2px;background:#7cbdf0;"></div>
<svg style="left:1073px;top:696px;" width="12" height="7" viewBox="0 0 12 7"><path d="M.6 6.400 L6 1 L11.400 6.400" fill="none" stroke="#fff" stroke-width="1.200"/></svg>
<svg style="left:1097px;top:692px;" width="13" height="16" viewBox="0 0 13 16"><path d="M2.500 2.200 A7 7 0 0 1 10 2.200 M2.500 13.800 A7 7 0 0 0 10 13.800" fill="none" stroke="#fff" stroke-width="1.100"/><rect x=".8" y="5" width="7.200" height="6" rx="1.200" fill="none" stroke="#fff" stroke-width="1.200"/><path d="M8.300 7.300 L11.500 5.300 V10.700 L8.300 8.700Z" fill="none" stroke="#fff" stroke-width="1.100"/></svg>
<svg style="left:1119px;top:693px;" width="17" height="15" viewBox="0 0 17 15"><rect x="4.500" y="1.500" width="11.500" height="8" fill="none" stroke="#fff" stroke-width="1.200"/><path d="M10.200 9.500 V13 M6.500 13.500 H14" stroke="#fff" stroke-width="1.200"/><rect x=".6" y=".6" width="4.800" height="4.200" fill="#06101f" stroke="#fff" stroke-width="1.100"/><path d="M2 2 L3 3.300 L4.200 2" fill="none" stroke="#fff" stroke-width=".8"/><path d="M3 5 V11 H7" fill="none" stroke="#fff" stroke-width="1.100"/></svg>
<svg style="left:1143px;top:693px;" width="17" height="14" viewBox="0 0 17 14"><path d="M.6 4.500 H3.500 L7 1 V13 L3.500 9.500 H.6Z" fill="none" stroke="#fff" stroke-width="1.100"/><path d="M9.300 4.800 A3.200 3.200 0 0 1 9.300 9.200 M11.300 2.800 A6 6 0 0 1 11.300 11.200 M13.400 .9 A8.700 8.700 0 0 1 13.400 13.100" fill="none" stroke="#fff" stroke-width="1.100"/></svg>
<span class="t" style="left:1171.00px;top:686px;font-size:11.5px;color:#fff;letter-spacing:-0.154px;">10:19 PM</span>
<span class="t" style="left:1169.00px;top:704px;font-size:11.5px;color:#fff;letter-spacing:0.092px;">4/23/2025</span>
<svg style="left:1239px;top:692px;" width="17" height="16" viewBox="0 0 17 16"><path d="M.7 .7 H15.800 V11.500 H10.500 L8.200 14.500 L6 11.500 H.7Z" fill="none" stroke="#fff" stroke-width="1.300"/></svg>
<div style="left:1275px;top:680px;width:1px;height:40px;background:#50585f;"></div>
<div style="left:1036px;top:606px;width:200px;height:70px;"><span class="t" style="left:4px;top:11px;font-size:47px;font-weight:700;color:#fff;transform-origin:0 0;transform:scaleX(.64);text-shadow:0 0 3px rgba(0,0,0,.22),0 2px 4px rgba(0,0,0,.10)">ANY</span><span class="t" style="left:134px;top:11px;font-size:47px;font-weight:700;color:#fff;transform-origin:0 0;transform:scaleX(.615);text-shadow:0 0 3px rgba(0,0,0,.22),0 2px 4px rgba(0,0,0,.10)">RUN</span><svg style="left:74px;top:3px;filter:drop-shadow(0 0 2px rgba(0,0,0,.22))" width="56" height="62" viewBox="0 0 56 62"><path d="M3 12 V52 M10 4 L52 28 L10 58 V4" fill="none" stroke="#fff" stroke-width="5" stroke-linejoin="round"/><path d="M17 17 L38 29 L17 44Z" fill="none" stroke="#f1f1f1" stroke-width="3" stroke-linejoin="round"/></svg></div>
</body>
</html>
